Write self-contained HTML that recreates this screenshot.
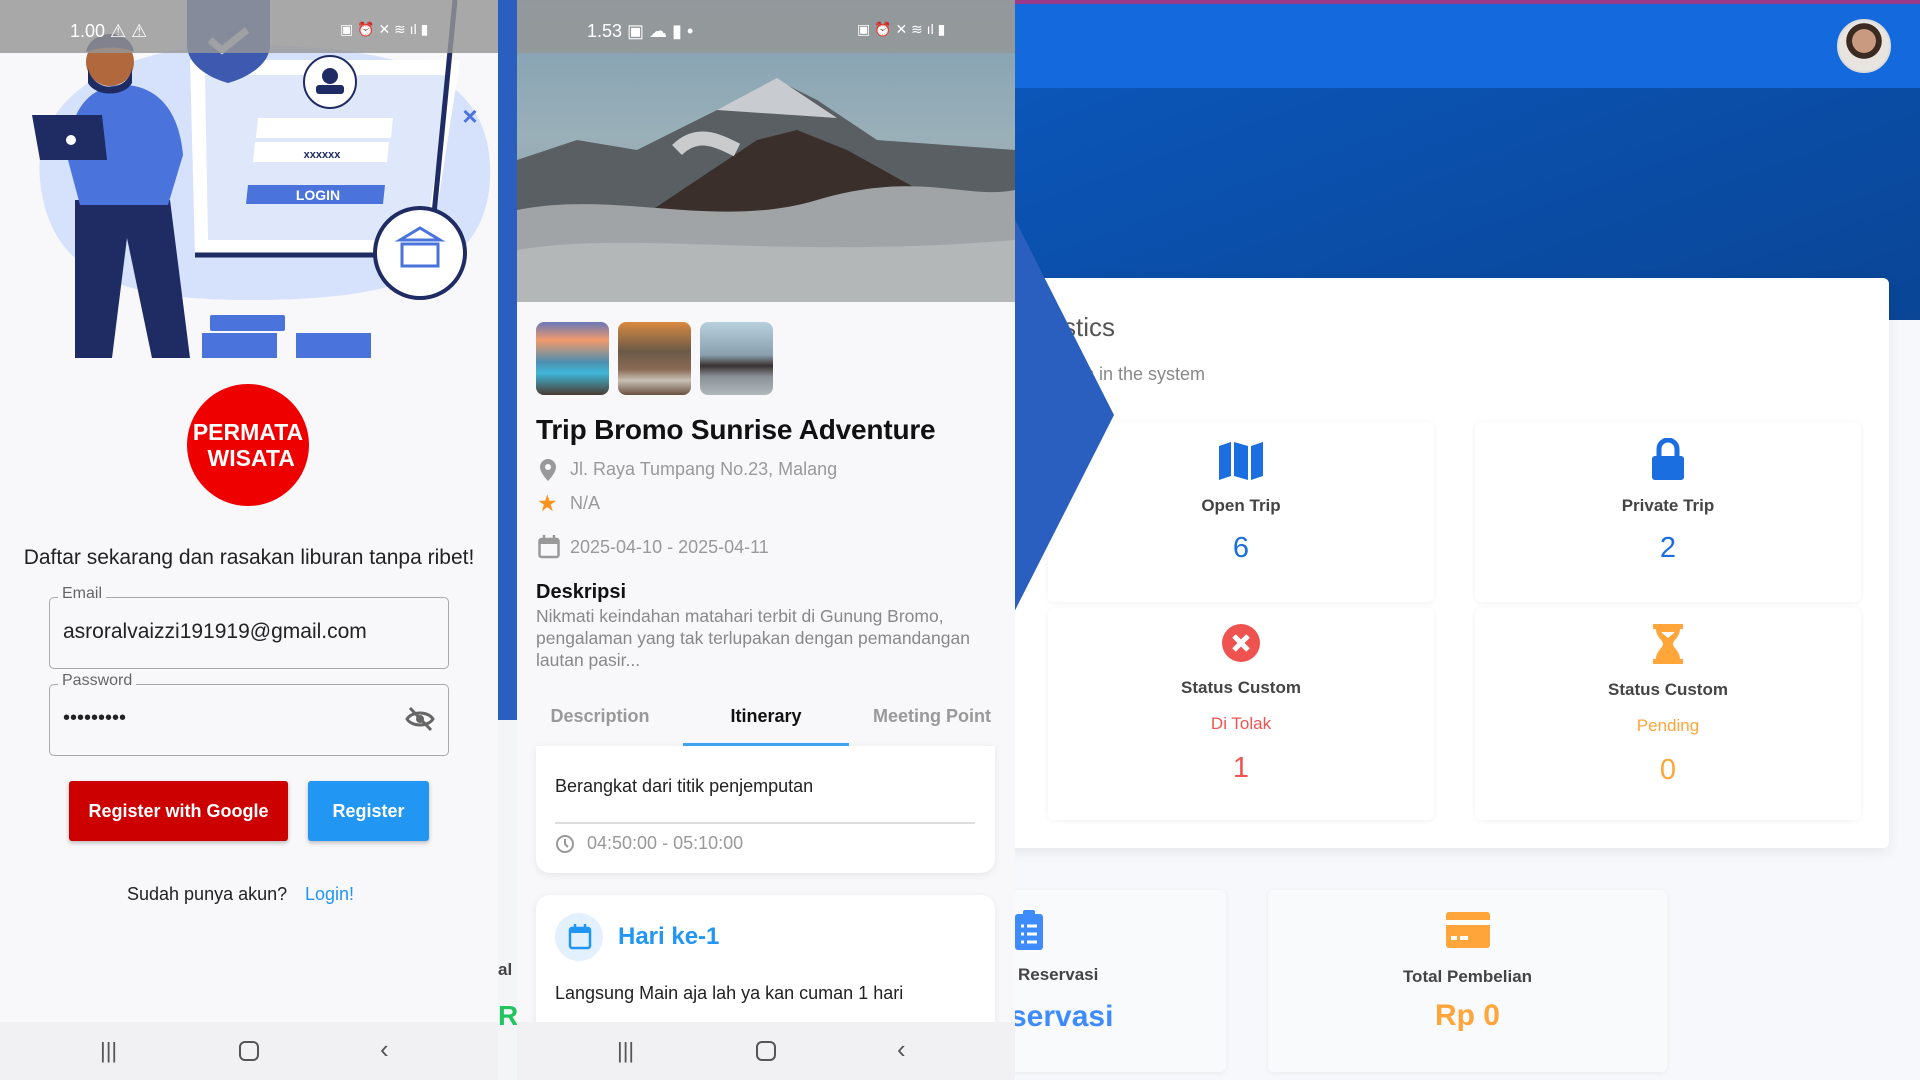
<!DOCTYPE html>
<html><head><meta charset="utf-8"><style>
*{margin:0;padding:0;box-sizing:border-box}
body{width:1920px;height:1080px;overflow:hidden;position:relative;background:#f6f8fb;font-family:"Liberation Sans",sans-serif}
.abs{position:absolute}
.p1{left:0;top:0;width:498px;height:1080px;background:#f8f8fa;overflow:hidden}
.p2{left:517px;top:0;width:498px;height:1080px;background:#f8f8fa;overflow:hidden}
.sb{left:0;top:0;width:498px;height:53px;background:rgba(150,150,150,.82);color:#fff;font-size:18px}
.nav{left:0;top:1022px;width:498px;height:58px;background:#f1f1f3}
.field{border:1.5px solid #a9a9a9;border-radius:5px}
.lbl{font-size:16px;color:#666;background:#f8f8fa;padding:0 4px}
.card{background:#fff;border-radius:6px;box-shadow:0 1px 6px rgba(0,0,0,.06)}
.c{text-align:center}
.st{font-size:17px;font-weight:bold;color:#444}
</style></head><body>

<!-- dashboard panel -->
<div class="abs" style="left:1015px;top:0;width:905px;height:4px;background:#9b3a8a"></div>
<div class="abs" style="left:1015px;top:4px;width:905px;height:84px;background:#1469dd"></div>
<div class="abs" style="left:1015px;top:88px;width:905px;height:232px;background:linear-gradient(160deg,#0b56b8,#0a4596)"></div>
<div class="abs" style="left:1837px;top:19px;width:54px;height:54px;border-radius:50%;background:radial-gradient(circle at 50% 40%,#c99a80 0 30%,#3a2a22 31% 45%,#e8e4e0 46%);border:2px solid #ddd"></div>
<div class="abs card" style="left:1000px;top:278px;width:889px;height:570px;box-shadow:0 4px 14px rgba(0,0,0,.07)"></div>
<div class="abs" style="left:1050px;top:312px;font-size:26px;color:#555">tistics</div>
<div class="abs" style="left:1072px;top:364px;font-size:18px;color:#888">ics in the system</div>

<div class="abs card c" style="left:1048px;top:422px;width:386px;height:180px">
 <svg style="margin-top:20px" width="46" height="38" viewBox="0 0 46 38"><path d="M1 4l12-4v34L1 38zM16 0l14 4v34l-14-4zM33 4l12-4v34l-12 4z" fill="#1a6ee0"/></svg>
 <div class="st" style="margin-top:11px">Open Trip</div><div style="font-size:29px;color:#1a6ee0;margin-top:16px">6</div></div>
<div class="abs card c" style="left:1475px;top:422px;width:386px;height:180px">
 <svg style="margin-top:16px" width="36" height="42" viewBox="0 0 36 42"><path d="M9 18V11a9 9 0 0118 0v7" stroke="#1a6ee0" stroke-width="5" fill="none"/><rect x="2" y="18" width="32" height="24" rx="3" fill="#1a6ee0"/></svg>
 <div class="st" style="margin-top:11px">Private Trip</div><div style="font-size:29px;color:#1a6ee0;margin-top:16px">2</div></div>
<div class="abs card c" style="left:1048px;top:608px;width:386px;height:212px">
 <svg style="margin-top:16px" width="38" height="38" viewBox="0 0 38 38"><circle cx="19" cy="19" r="19" fill="#ef5350"/><path d="M12 12l14 14M26 12L12 26" stroke="#fff" stroke-width="5"/></svg>
 <div class="st" style="margin-top:11px">Status Custom</div><div style="font-size:17px;color:#ef5350;margin-top:16px">Di Tolak</div><div style="font-size:29px;color:#ef5350;margin-top:18px">1</div></div>
<div class="abs card c" style="left:1475px;top:608px;width:386px;height:212px">
 <svg style="margin-top:16px" width="30" height="40" viewBox="0 0 30 40"><path d="M0 0h30v5h-3c0 8-7 11-7 15s7 7 7 15h3v5H0v-5h3c0-8 7-11 7-15S3 13 3 5H0z" fill="#ffa53a"/><path d="M8 8h14l-7 6z" fill="#fff"/></svg>
 <div class="st" style="margin-top:11px">Status Custom</div><div style="font-size:17px;color:#ffa53a;margin-top:16px">Pending</div><div style="font-size:29px;color:#ffa53a;margin-top:18px">0</div></div>

<div class="abs card" style="left:950px;top:890px;width:276px;height:182px;background:#f8fafc"></div>
<svg class="abs" style="left:1015px;top:910px" width="28" height="40" viewBox="0 0 28 40"><rect x="0" y="4" width="28" height="36" rx="3" fill="#3d8bfd"/><rect x="8" y="0" width="12" height="8" rx="2" fill="#3d8bfd"/><path d="M6 16h3M12 16h10M6 24h3M12 24h10M6 32h3M12 32h10" stroke="#fff" stroke-width="3"/></svg>
<div class="abs st" style="left:1018px;top:965px">Reservasi</div>
<div class="abs" style="left:1010px;top:1000px;font-size:30px;color:#3d8bfd;font-weight:bold">servasi</div>
<div class="abs card c" style="left:1268px;top:890px;width:399px;height:182px;background:#f8fafc">
 <svg style="margin-top:22px" width="44" height="36" viewBox="0 0 44 36"><rect x="0" y="0" width="44" height="36" rx="3" fill="#ffa53a"/><rect x="0" y="8" width="44" height="5" fill="#fff"/><rect x="5" y="24" width="6" height="4" fill="#fff"/><rect x="14" y="24" width="8" height="4" fill="#fff"/></svg>
 <div class="st" style="margin-top:14px">Total Pembelian</div><div style="font-size:30px;color:#ffa53a;margin-top:12px;font-weight:bold">Rp 0</div></div>

<!-- strip -->
<div class="abs" style="left:498px;top:0;width:19px;height:1080px;background:#f4f5f7"></div>
<div class="abs" style="left:498px;top:0;width:19px;height:720px;background:#2a5fc0"></div>
<div class="abs" style="left:498px;top:960px;font-size:17px;font-weight:bold;color:#444">al</div>
<div class="abs" style="left:498px;top:1000px;font-size:28px;font-weight:bold;color:#22c55e">R</div>
<svg class="abs" style="left:1000px;top:180px" width="120" height="470"><polygon points="0,10 114,235 0,460" fill="#2a5fc0"/></svg>

<!-- panel 1 -->
<div class="abs p1">
 <svg class="abs" style="left:0;top:0" width="498" height="360" viewBox="0 0 498 360">
  <path d="M40 180C30 80 150 40 260 45C380 50 495 60 490 180C485 280 380 300 250 300C130 300 50 280 40 180z" fill="#d6e1fb"/>
  <path d="M190 60h270l-30 195H195z" fill="#fff"/><path d="M205 75h245l-25 165H208z" fill="#dfe7fb"/>
  <path d="M455 0l-25 255H195" stroke="#1f2b63" stroke-width="5" fill="none"/>
  <circle cx="330" cy="82" r="26" fill="#fff" stroke="#1f2b63" stroke-width="2"/><circle cx="330" cy="76" r="8" fill="#1f2b63"/><rect x="316" y="85" width="28" height="9" rx="3" fill="#1f2b63"/>
  <path d="M258 118h135l-2 20H256zM255 142h134l-2 20H253z" fill="#fff"/><text x="322" y="158" font-size="11" font-weight="bold" fill="#1f2b63" text-anchor="middle" font-family="Liberation Sans">xxxxxx</text>
  <path d="M248 185h137l-2 19H246z" fill="#4a74dc"/><text x="318" y="200" font-size="14" font-weight="bold" fill="#fff" text-anchor="middle" font-family="Liberation Sans">LOGIN</text>
  <text x="470" y="125" font-size="26" fill="#4a74dc" font-weight="bold" text-anchor="middle" font-family="Liberation Sans">×</text>
  <circle cx="420" cy="253" r="45" fill="#fff" stroke="#1f2b63" stroke-width="4"/><path d="M400 240l20-12 20 12zM402 244h36v22h-36z" fill="none" stroke="#4a74dc" stroke-width="3"/>
  <path d="M187 0h83v45c0 18-20 32-42 38-22-6-41-20-41-38z" fill="#3d5ab0"/><path d="M210 40l12 10 25-20" stroke="#c8d2ea" stroke-width="7" fill="none"/>
  <path d="M75 200h95l20 158h-38l-25-120-15 120H75z" fill="#1f2b63"/>
  <path d="M68 160c0-60 30-75 55-75s55 15 60 70l-15 50H80z" fill="#4a74dc"/>
  <circle cx="110" cy="62" r="24" fill="#b0683c"/><path d="M88 68c5 25 40 25 44 0v15c-8 14-36 14-44 0z" fill="#1f2b63"/><path d="M86 52c5-24 44-24 48 0-10-6-34-6-48 0z" fill="#1f2b63"/>
  <path d="M32 115h70l5 45H40z" fill="#1f2b63"/><circle cx="71" cy="140" r="5" fill="#fff"/>
  <rect x="210" y="315" width="75" height="16" rx="2" fill="#4a74dc"/><rect x="202" y="333" width="75" height="25" fill="#4a74dc"/><rect x="296" y="333" width="75" height="25" fill="#4a74dc"/>
 </svg>
 <div class="abs sb"><span class="abs" style="left:70px;top:21px">1.00 ⚠ ⚠</span><span class="abs" style="left:340px;top:21px;font-size:14px">▣ ⏰ ✕ ≋ ıl ▮</span></div>
 <div class="abs c" style="left:187px;top:384px;width:122px;height:122px;border-radius:50%;background:#ee0000;color:#fff;font-weight:bold;font-size:23px;line-height:26px;padding-top:35px;letter-spacing:0">PERMATA<br>&nbsp;WISATA</div>
 <div class="abs c" style="left:0;top:546px;width:498px;font-size:21px;color:#222">Daftar sekarang dan rasakan liburan tanpa ribet!</div>
 <div class="abs field" style="left:49px;top:597px;width:400px;height:72px"></div>
 <div class="abs lbl" style="left:58px;top:585px">Email</div>
 <div class="abs" style="left:63px;top:620px;font-size:21px;color:#222">asroralvaizzi191919@gmail.com</div>
 <div class="abs field" style="left:49px;top:684px;width:400px;height:72px"></div>
 <div class="abs lbl" style="left:58px;top:672px">Password</div>
 <div class="abs" style="left:63px;top:707px;font-size:20px;color:#222;letter-spacing:0">•••••••••</div>
 <svg class="abs" style="left:405px;top:706px" width="30" height="26" viewBox="0 0 30 26"><path d="M2 13C7 5 23 5 28 13 23 21 7 21 2 13z" fill="none" stroke="#666" stroke-width="3"/><circle cx="15" cy="13" r="4" fill="#666"/><path d="M5 2l21 22" stroke="#666" stroke-width="3"/></svg>
 <div class="abs c" style="left:69px;top:781px;width:219px;height:60px;background:#cc0000;border-radius:3px;color:#fff;font-size:18px;font-weight:bold;line-height:60px;box-shadow:0 2px 4px rgba(0,0,0,.25)">Register with Google</div>
 <div class="abs c" style="left:308px;top:781px;width:121px;height:60px;background:#2196f3;border-radius:3px;color:#fff;font-size:18px;font-weight:bold;line-height:60px;box-shadow:0 2px 4px rgba(0,0,0,.25)">Register</div>
 <div class="abs" style="left:127px;top:884px;font-size:18px;color:#222">Sudah punya akun?</div>
 <div class="abs" style="left:305px;top:884px;font-size:18px;color:#2196f3">Login!</div>
 <div class="abs nav"><span class="abs" style="left:100px;top:16px;font-size:22px;color:#555">|||</span><span class="abs" style="left:239px;top:19px;width:20px;height:20px;border:2.5px solid #555;border-radius:6px"></span><span class="abs" style="left:380px;top:12px;font-size:26px;color:#555">‹</span></div>
</div>

<!-- panel 2 -->
<div class="abs p2">
 <svg class="abs" style="left:0;top:0" width="498" height="302" viewBox="0 0 498 302">
  <defs><linearGradient id="sky" x1="0" y1="0" x2="0" y2="1"><stop offset="0" stop-color="#7f9db0"/><stop offset=".45" stop-color="#9ab0b9"/><stop offset="1" stop-color="#8c9294"/></linearGradient></defs>
  <rect width="498" height="302" fill="url(#sky)"/>
  <path d="M0 160L60 140 120 150 200 110 260 80 300 100 360 140 498 150V302H0z" fill="#595f63"/>
  <path d="M200 110l60-32 60 40z" fill="#c8ccd0"/>
  <path d="M120 220L240 140 280 130 330 150 420 200z" fill="#3a2f2b"/>
  <path d="M160 150c20-20 40-10 60 0" stroke="#e6e6e6" stroke-width="14" fill="none" opacity=".8"/>
  <path d="M0 210C100 190 200 230 300 200S450 200 498 190V302H0z" fill="#a0a4a6"/>
  <path d="M0 250C120 230 260 260 498 240V302H0z" fill="#b4b7b8"/>
 </svg>
 <div class="abs sb"><span class="abs" style="left:70px;top:21px">1.53 ▣ ☁ ▮ •</span><span class="abs" style="left:340px;top:21px;font-size:14px">▣ ⏰ ✕ ≋ ıl ▮</span></div>
 <div class="abs" style="left:19px;top:322px;width:73px;height:73px;border-radius:8px;background:linear-gradient(180deg,#6a78b8,#f19a6b 25%,#4d8fb0 55%,#3fb8d8 70%,#4a3a30)"></div>
 <div class="abs" style="left:101px;top:322px;width:73px;height:73px;border-radius:8px;background:linear-gradient(180deg,#d98a40,#6b5a48 40%,#8a6a55 65%,#c8c0b5 80%,#6a5040)"></div>
 <div class="abs" style="left:183px;top:322px;width:73px;height:73px;border-radius:8px;background:linear-gradient(180deg,#b8d0de,#8aa0ae 45%,#3a3030 60%,#8a9298 75%,#b0b8bc)"></div>
 <div class="abs" style="left:19px;top:414px;font-size:28px;font-weight:bold;color:#111;letter-spacing:-0.2px">Trip Bromo Sunrise Adventure</div>
 <svg class="abs" style="left:22px;top:459px" width="18" height="22" viewBox="0 0 18 22"><path d="M9 0a8 8 0 018 8c0 6-8 14-8 14S1 14 1 8a8 8 0 018-8z" fill="#999"/><circle cx="9" cy="8" r="3" fill="#f8f8fa"/></svg>
 <div class="abs" style="left:53px;top:459px;font-size:18px;color:#999">Jl. Raya Tumpang No.23, Malang</div>
 <div class="abs" style="left:20px;top:490px;font-size:23px;color:#f7931e">★</div>
 <div class="abs" style="left:53px;top:493px;font-size:18px;color:#999">N/A</div>
 <svg class="abs" style="left:21px;top:535px" width="22" height="24" viewBox="0 0 22 24"><rect x="1.5" y="4" width="19" height="18" rx="2" fill="none" stroke="#999" stroke-width="2.5"/><rect x="1.5" y="4" width="19" height="5" fill="#999"/><path d="M6 0v5M16 0v5" stroke="#999" stroke-width="2.5"/></svg>
 <div class="abs" style="left:53px;top:537px;font-size:18px;color:#999">2025-04-10 - 2025-04-11</div>
 <div class="abs" style="left:19px;top:581px;font-size:20px;font-weight:bold;color:#111">Deskripsi</div>
 <div class="abs" style="left:19px;top:605px;font-size:17.5px;line-height:22px;color:#888;width:440px">Nikmati keindahan matahari terbit di Gunung Bromo, pengalaman yang tak terlupakan dengan pemandangan lautan pasir...</div>
 <div class="abs c" style="left:0;top:706px;width:166px;font-size:18px;font-weight:bold;color:#999">Description</div>
 <div class="abs c" style="left:166px;top:706px;width:166px;font-size:18px;font-weight:bold;color:#111">Itinerary</div>
 <div class="abs c" style="left:332px;top:706px;width:166px;font-size:18px;font-weight:bold;color:#999">Meeting Point</div>
 <div class="abs" style="left:166px;top:743px;width:166px;height:3px;background:#42a5f5"></div>
 <div class="abs card" style="left:19px;top:746px;width:459px;height:127px;border-radius:0 0 14px 14px;box-shadow:0 2px 8px rgba(0,0,0,.08)"></div>
 <div class="abs" style="left:38px;top:776px;font-size:18px;color:#222">Berangkat dari titik penjemputan</div>
 <div class="abs" style="left:38px;top:822px;width:420px;height:1.5px;background:#ddd"></div>
 <svg class="abs" style="left:38px;top:834px" width="20" height="20" viewBox="0 0 20 20"><circle cx="10" cy="10" r="8" fill="none" stroke="#999" stroke-width="2"/><path d="M10 5v5l3 3" stroke="#999" stroke-width="2" fill="none"/></svg>
 <div class="abs" style="left:70px;top:833px;font-size:18px;color:#999">04:50:00 - 05:10:00</div>
 <div class="abs card" style="left:19px;top:895px;width:459px;height:160px;border-radius:14px;box-shadow:0 2px 8px rgba(0,0,0,.08)"></div>
 <div class="abs" style="left:38px;top:913px;width:48px;height:48px;border-radius:50%;background:#e3f0fd"></div>
 <svg class="abs" style="left:51px;top:924px" width="24" height="26" viewBox="0 0 24 26"><rect x="2" y="4" width="20" height="20" rx="2" fill="none" stroke="#2196f3" stroke-width="2.5"/><rect x="2" y="4" width="20" height="5" fill="#2196f3"/><path d="M7 0v5M17 0v5" stroke="#2196f3" stroke-width="2.5"/></svg>
 <div class="abs" style="left:101px;top:923px;font-size:24px;font-weight:bold;color:#2196f3">Hari ke-1</div>
 <div class="abs" style="left:38px;top:983px;font-size:18px;color:#222">Langsung Main aja lah ya kan cuman 1 hari</div>
 <div class="abs nav"><span class="abs" style="left:100px;top:16px;font-size:22px;color:#555">|||</span><span class="abs" style="left:239px;top:19px;width:20px;height:20px;border:2.5px solid #555;border-radius:6px"></span><span class="abs" style="left:380px;top:12px;font-size:26px;color:#555">‹</span></div>
</div>
</body></html>
